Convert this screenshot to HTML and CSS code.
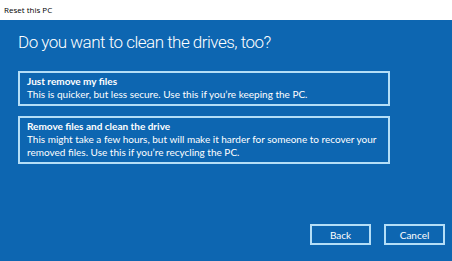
FILE: index.html
```html
<!DOCTYPE html>
<html lang="en">
<head>
    <meta charset="UTF-8">
    <title>Reset this PC</title>
    <link rel="stylesheet" href="styles.css">
</head>
<body>
    <div class="titlebar">Reset this PC</div>
    <div class="panel">
        <h1 class="heading">Do you want to clean the drives, too?</h1>
        <div class="option">
            <div class="option-title">Just remove my files</div>
            <div class="option-text">This is quicker, but less secure. Use this if you’re keeping the PC.</div>
        </div>
        <div class="option">
            <div class="option-title">Remove files and clean the drive</div>
            <div class="option-text">This might take a few hours, but will make it harder for someone to recover your removed files. Use this if you’re recycling the PC.</div>
        </div>
        <div class="button-row">
            <button class="dlg-button">Back</button>
            <button class="dlg-button">Cancel</button>
        </div>
    </div>
</body>
</html>
```

FILE: styles.css
```css
body {
    margin: 0;
    font-family: Lato, "Open Sans", sans-serif;
    width: 452px;
    height: 261px;
    overflow: hidden;
}
.titlebar {
    height: 20px;
    line-height: 20px;
    padding-left: 4px;
    font-size: 8px;
    font-family: "Open Sans", sans-serif;
    color: #000;
    background-color: #fff;
    box-sizing: border-box;
}
.panel {
    height: 241px;
    background-color: #0d66b1;
    color: #fff;
    padding: 0 7px 0 18px;
    box-sizing: border-box;
    display: flex;
    flex-direction: column;
}
.heading {
    margin: 10px 0 0 0;
    font-family: Roboto, sans-serif;
    font-size: 17px;
    font-weight: 300;
    letter-spacing: -0.5px;
    line-height: 24px;
}
.option {
    width: 372px;
    box-sizing: border-box;
    border: 2px solid #b4def7;
    padding: 2px 7px 3px;
    margin-top: 10px;
    font-size: 10px;
    line-height: 13px;
}
.option:first-of-type {
    margin-top: 17px;
}
.option-title {
    font-weight: 700;
}
.button-row {
    margin-top: auto;
    margin-bottom: 16px;
    display: flex;
    justify-content: flex-end;
    gap: 13px;
}
.dlg-button {
    width: 61px;
    height: 21px;
    background: transparent;
    border: 2px solid #b4def7;
    color: #fff;
    font-family: inherit;
    font-size: 10px;
    padding: 0;
}
```
